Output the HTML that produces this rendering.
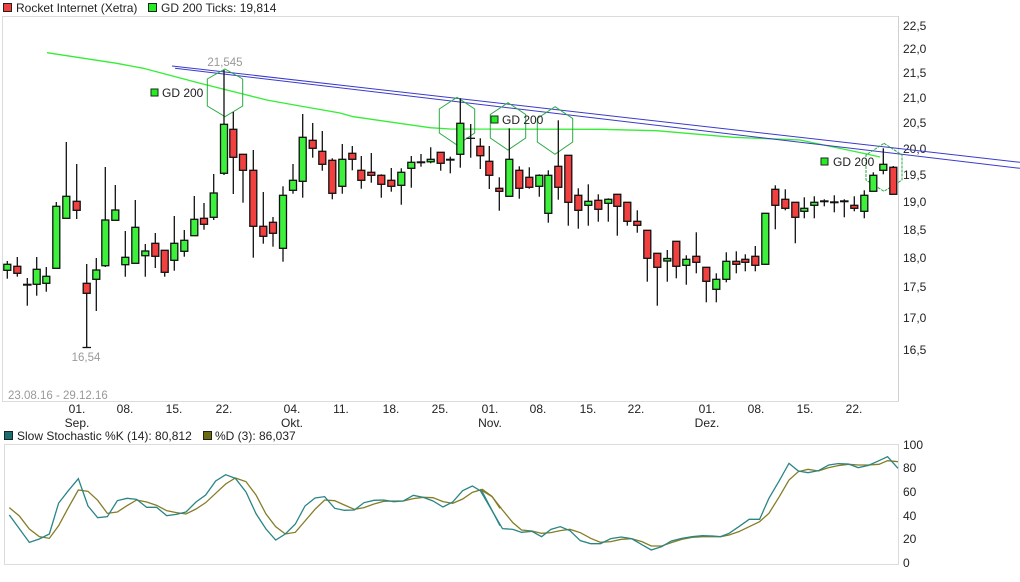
<!DOCTYPE html>
<html><head><meta charset="utf-8"><style>
html,body{margin:0;padding:0;background:#fff;}
svg{display:block;font-family:"Liberation Sans",Arial,sans-serif;}
</style></head><body>
<svg width="1020" height="582" viewBox="0 0 1020 582" xmlns="http://www.w3.org/2000/svg">
<!-- legend -->
<rect x="3.5" y="3.5" width="8" height="8" fill="#f04040" stroke="#222" stroke-width="1"/>
<text x="16" y="12" font-size="12" fill="#222">Rocket Internet (Xetra)</text>
<rect x="148.5" y="3.5" width="8" height="8" fill="#22ee22" stroke="#222" stroke-width="1"/>
<text x="161" y="12" font-size="12" fill="#222">GD 200 Ticks: 19,814</text>

<!-- main frame -->
<rect x="2.5" y="16.5" width="896" height="385" fill="none" stroke="#dcdcdc" stroke-width="1"/>
<line x1="898.5" y1="16" x2="898.5" y2="401" stroke="#d0d0d0"/>

<!-- price axis labels -->
<g font-size="12" fill="#222">
<text x="903" y="30">22,5</text>
<text x="903" y="53">22,0</text>
<text x="903" y="77">21,5</text>
<text x="903" y="102">21,0</text>
<text x="903" y="127">20,5</text>
<text x="903" y="153">20,0</text>
<text x="903" y="179">19,5</text>
<text x="903" y="206">19,0</text>
<text x="903" y="234">18,5</text>
<text x="903" y="262">18,0</text>
<text x="903" y="291">17,5</text>
<text x="903" y="322">17,0</text>
<text x="903" y="354">16,5</text>
</g>

<!-- date axis -->
<g font-size="12" fill="#222" text-anchor="middle">
<text x="77" y="413">01.</text><text x="77" y="427">Sep.</text>
<text x="125" y="413">08.</text>
<text x="174" y="413">15.</text>
<text x="224" y="413">22.</text>
<text x="292" y="413">04.</text><text x="292" y="427">Okt.</text>
<text x="341" y="413">11.</text>
<text x="391" y="413">18.</text>
<text x="440" y="413">25.</text>
<text x="490" y="413">01.</text><text x="490" y="427">Nov.</text>
<text x="538" y="413">08.</text>
<text x="588" y="413">15.</text>
<text x="636" y="413">22.</text>
<text x="707" y="413">01.</text><text x="707" y="427">Dez.</text>
<text x="756" y="413">08.</text>
<text x="805" y="413">15.</text>
<text x="854" y="413">22.</text>
</g>
<text x="8" y="399" font-size="11.5" fill="#999">23.08.16 - 29.12.16</text>

<!-- GD200 line -->
<polyline fill="none" stroke="#33ee33" stroke-width="1.3" points="47,52.7 116.7,63.3 143.3,68.3 200,83.3 266.7,100 300,106 340,113 353.3,116.7 430,127.7 450,129 600,129.3 656.7,130.7 733.3,137.3 800,140 866.7,154 880,157"/>

<!-- trend lines -->
<line x1="172" y1="66" x2="1020" y2="162.3" stroke="#3a3acc" stroke-width="1"/>
<line x1="175" y1="68.3" x2="1020" y2="168.3" stroke="#3a3acc" stroke-width="1"/>

<!-- hexagons -->
<g fill="none" stroke="#2aaa44" stroke-width="1">
<polygon points="225,69 242.7,79 242.7,106 225,116.7 207.3,106 207.3,79"/>
<polygon points="457,97.3 474.7,109 474.7,133 457,145 439.3,133 439.3,109"/>
<polygon points="508,102.7 525.7,114.5 525.7,138 508,150 490.3,138 490.3,114.5"/>
<polygon points="555,106.7 572.7,118.5 572.7,142 555,154.3 537.3,142 537.3,118.5"/>
<polygon points="884,143.3 902,155 902,180 884,191.3 866,180 866,155" stroke-dasharray="3,1"/>
</g>

<!-- labels -->
<text x="225" y="66" font-size="11.5" fill="#999" text-anchor="middle">21,545</text>
<text x="86" y="361" font-size="11.5" fill="#999" text-anchor="middle">16,54</text>
<g font-size="12" fill="#222">
<rect x="151" y="89" width="7" height="7" fill="#22ee22" stroke="#222" stroke-width="1"/><text x="162" y="97">GD 200</text>
<rect x="491" y="116" width="7" height="7" fill="#22ee22" stroke="#222" stroke-width="1"/><text x="502" y="124">GD 200</text>
<rect x="821" y="158" width="7" height="7" fill="#22ee22" stroke="#222" stroke-width="1"/><text x="833" y="166">GD 200</text>
</g>

<!-- candles -->
<g stroke="#111" stroke-width="1.3" id="c">
</g>
<g stroke="#111" stroke-width="1.3">
<line x1="7.3" y1="261" x2="7.3" y2="278.7"/><rect x="3.8" y="264.3" width="7" height="6" fill="#3cf03c"/>
<line x1="17.3" y1="257" x2="17.3" y2="276.7"/><rect x="13.8" y="266.3" width="7" height="7" fill="#f04040"/>
<line x1="27.3" y1="278" x2="27.3" y2="305.7"/><line x1="23" y1="284.7" x2="31.6" y2="284.7" stroke-width="2"/>
<line x1="36.7" y1="257" x2="36.7" y2="295.7"/><rect x="33.2" y="269.3" width="7" height="15" fill="#3cf03c"/>
<line x1="46.3" y1="267" x2="46.3" y2="291.7"/><rect x="42.8" y="276.3" width="7" height="7" fill="#3cf03c"/>
<line x1="56.3" y1="202" x2="56.3" y2="268"/><rect x="52.8" y="206.3" width="7" height="62" fill="#3cf03c"/>
<line x1="66.3" y1="142" x2="66.3" y2="218"/><rect x="62.8" y="196.3" width="7" height="22" fill="#3cf03c"/>
<line x1="76.7" y1="164" x2="76.7" y2="219"/><rect x="73.2" y="201.3" width="7" height="9" fill="#f04040"/>
<line x1="86.7" y1="264" x2="86.7" y2="347.5"/><line x1="82.5" y1="347.5" x2="91" y2="347.5"/><rect x="83.2" y="283.3" width="7" height="10" fill="#f04040"/>
<line x1="96.3" y1="258" x2="96.3" y2="311"/><rect x="92.8" y="270" width="7" height="9.3" fill="#3cf03c"/>
<line x1="105.3" y1="167" x2="105.3" y2="267"/><rect x="101.8" y="220" width="7" height="45.7" fill="#3cf03c"/>
<line x1="115.3" y1="185" x2="115.3" y2="220"/><rect x="111.8" y="210" width="7" height="10.3" fill="#3cf03c"/>
<line x1="125.3" y1="231" x2="125.3" y2="276.7"/><rect x="121.8" y="257.3" width="7" height="7.4" fill="#3cf03c"/>
<line x1="135.3" y1="200" x2="135.3" y2="263"/><rect x="131.8" y="227.3" width="7" height="36" fill="#3cf03c"/>
<line x1="145.3" y1="244" x2="145.3" y2="276.7"/><rect x="141.8" y="251" width="7" height="4.7" fill="#3cf03c"/>
<line x1="155.3" y1="233" x2="155.3" y2="268"/><rect x="151.8" y="243.3" width="7" height="13" fill="#f04040"/>
<line x1="164.7" y1="250" x2="164.7" y2="276.7"/><rect x="161.2" y="250.3" width="7" height="22" fill="#f04040"/>
<line x1="174.3" y1="216" x2="174.3" y2="270.7"/><rect x="170.8" y="243.3" width="7" height="17" fill="#3cf03c"/>
<line x1="184.3" y1="230" x2="184.3" y2="256.7"/><rect x="180.8" y="240.3" width="7" height="11" fill="#3cf03c"/>
<line x1="194.3" y1="196" x2="194.3" y2="235.7"/><rect x="190.8" y="219.3" width="7" height="16.4" fill="#3cf03c"/>
<line x1="204" y1="203" x2="204" y2="229.7"/><rect x="200.5" y="218.3" width="7" height="6" fill="#f04040"/>
<line x1="213.7" y1="174" x2="213.7" y2="220"/><rect x="210.2" y="193" width="7" height="24.3" fill="#3cf03c"/>
<line x1="224" y1="70" x2="224" y2="175"/><rect x="220.5" y="124.3" width="7" height="49" fill="#3cf03c"/>
<line x1="233.3" y1="112" x2="233.3" y2="194"/><rect x="229.8" y="129.3" width="7" height="28" fill="#f04040"/>
<line x1="243" y1="154" x2="243" y2="202.7"/><rect x="239.5" y="154.3" width="7" height="16" fill="#f04040"/>
<line x1="253.3" y1="150" x2="253.3" y2="257.7"/><rect x="249.8" y="170.3" width="7" height="56" fill="#f04040"/>
<line x1="263.3" y1="192" x2="263.3" y2="243.7"/><rect x="259.8" y="226.3" width="7" height="10" fill="#f04040"/>
<line x1="273" y1="217" x2="273" y2="246.7"/><rect x="269.5" y="222.3" width="7" height="11" fill="#f04040"/>
<line x1="283" y1="186.3" x2="283" y2="261.7"/><rect x="279.5" y="195.3" width="7" height="53" fill="#3cf03c"/>
<line x1="293" y1="164" x2="293" y2="193.7"/><rect x="289.5" y="180.3" width="7" height="10" fill="#3cf03c"/>
<line x1="302.7" y1="114" x2="302.7" y2="197.7"/><rect x="299.2" y="137.3" width="7" height="44" fill="#3cf03c"/>
<line x1="312.7" y1="123" x2="312.7" y2="157.7"/><rect x="309.2" y="140.3" width="7" height="8" fill="#f04040"/>
<line x1="322.3" y1="131" x2="322.3" y2="170.7"/><rect x="318.8" y="151.3" width="7" height="13" fill="#f04040"/>
<line x1="332.3" y1="158.3" x2="332.3" y2="199.3"/><rect x="328.8" y="160.3" width="7" height="33" fill="#f04040"/>
<line x1="342.3" y1="144" x2="342.3" y2="193.7"/><rect x="338.8" y="159.3" width="7" height="27" fill="#3cf03c"/>
<line x1="352.3" y1="146" x2="352.3" y2="170.3"/><rect x="348.8" y="153.3" width="7" height="6" fill="#f04040"/>
<line x1="361.3" y1="156" x2="361.3" y2="188.7"/><rect x="357.8" y="170.3" width="7" height="10" fill="#f04040"/>
<line x1="371.3" y1="153" x2="371.3" y2="182.7"/><rect x="367.8" y="172.3" width="7" height="3" fill="#f04040"/>
<line x1="381.3" y1="174.3" x2="381.3" y2="197.7"/><rect x="377.8" y="175.3" width="7" height="9" fill="#f04040"/>
<line x1="391.3" y1="168" x2="391.3" y2="191.7"/><rect x="387.8" y="180.3" width="7" height="6" fill="#f04040"/>
<line x1="401.3" y1="168.3" x2="401.3" y2="204.7"/><rect x="397.8" y="172.3" width="7" height="13" fill="#3cf03c"/>
<line x1="411.3" y1="156" x2="411.3" y2="187.7"/><rect x="407.8" y="162.3" width="7" height="6" fill="#3cf03c"/>
<line x1="421" y1="154" x2="421" y2="166.7"/><line x1="416.7" y1="162.3" x2="425.3" y2="162.3" stroke-width="2"/>
<line x1="430.7" y1="147.3" x2="430.7" y2="163.3"/><rect x="427.2" y="159.3" width="7" height="2.5" fill="#3cf03c"/>
<line x1="440.7" y1="152.3" x2="440.7" y2="170.7"/><rect x="437.2" y="152.3" width="7" height="11" fill="#f04040"/>
<line x1="450.3" y1="156.7" x2="450.3" y2="173.3"/><line x1="446" y1="159.7" x2="454.6" y2="159.7" stroke-width="2"/>
<line x1="460.3" y1="98.3" x2="460.3" y2="167.7"/><rect x="456.8" y="123.3" width="7" height="31" fill="#3cf03c"/>
<line x1="470.7" y1="124" x2="470.7" y2="157.7"/><line x1="466.4" y1="138.3" x2="475" y2="138.3"/>
<line x1="480.3" y1="138.3" x2="480.3" y2="169"/><rect x="476.8" y="146.3" width="7" height="9.4" fill="#f04040"/>
<line x1="489.3" y1="146" x2="489.3" y2="189"/><rect x="485.8" y="161.3" width="7" height="14" fill="#f04040"/>
<line x1="499.3" y1="177.3" x2="499.3" y2="210.7"/><rect x="495.8" y="188.3" width="7" height="3" fill="#f04040"/>
<line x1="509.3" y1="128.3" x2="509.3" y2="196.3"/><rect x="505.8" y="159.3" width="7" height="37" fill="#3cf03c"/>
<line x1="519.3" y1="166.3" x2="519.3" y2="198.7"/><rect x="515.8" y="170.3" width="7" height="18" fill="#f04040"/>
<line x1="529.3" y1="167.3" x2="529.3" y2="188.7"/><rect x="525.8" y="177.3" width="7" height="10" fill="#f04040"/>
<line x1="539.3" y1="174.3" x2="539.3" y2="196.7"/><rect x="535.8" y="175.3" width="7" height="11" fill="#3cf03c"/>
<line x1="548.3" y1="170.3" x2="548.3" y2="222.7"/><rect x="544.8" y="175.3" width="7" height="38" fill="#3cf03c"/>
<line x1="558.3" y1="120.3" x2="558.3" y2="199.7"/><rect x="554.8" y="166.3" width="7" height="21" fill="#f04040"/>
<line x1="568.3" y1="155.3" x2="568.3" y2="225.7"/><rect x="564.8" y="155.3" width="7" height="47" fill="#f04040"/>
<line x1="578.3" y1="188.3" x2="578.3" y2="228.7"/><rect x="574.8" y="195.3" width="7" height="15" fill="#f04040"/>
<line x1="588.3" y1="184.3" x2="588.3" y2="225.7"/><rect x="584.8" y="201.3" width="7" height="4" fill="#3cf03c"/>
<line x1="598.3" y1="194.3" x2="598.3" y2="221.7"/><rect x="594.8" y="200.3" width="7" height="9" fill="#f04040"/>
<line x1="608.3" y1="198.3" x2="608.3" y2="221.7"/><rect x="604.8" y="199.3" width="7" height="4" fill="#3cf03c"/>
<line x1="617.3" y1="194.3" x2="617.3" y2="235.7"/><rect x="613.8" y="194.3" width="7" height="12" fill="#f04040"/>
<line x1="627.3" y1="202.3" x2="627.3" y2="225.7"/><rect x="623.8" y="202.3" width="7" height="19" fill="#f04040"/>
<line x1="637.3" y1="210.3" x2="637.3" y2="232.7"/><rect x="633.8" y="221.3" width="7" height="4" fill="#f04040"/>
<line x1="647.3" y1="230.3" x2="647.3" y2="281.7"/><rect x="643.8" y="230.3" width="7" height="28" fill="#f04040"/>
<line x1="657.3" y1="253.3" x2="657.3" y2="305.7"/><rect x="653.8" y="253.3" width="7" height="14" fill="#f04040"/>
<line x1="667.3" y1="250" x2="667.3" y2="281.7"/><rect x="663.8" y="258.5" width="7" height="2.5" fill="#3cf03c"/>
<line x1="676.3" y1="241.3" x2="676.3" y2="278.3"/><rect x="672.8" y="241.3" width="7" height="25" fill="#f04040"/>
<line x1="686.3" y1="255.3" x2="686.3" y2="284.7"/><rect x="682.8" y="259.3" width="7" height="6" fill="#3cf03c"/>
<line x1="696.3" y1="232.3" x2="696.3" y2="273.3"/><rect x="692.8" y="256.3" width="7" height="6" fill="#f04040"/>
<line x1="706.3" y1="267.3" x2="706.3" y2="302.3"/><rect x="702.8" y="267.3" width="7" height="14" fill="#f04040"/>
<line x1="716.3" y1="273.3" x2="716.3" y2="302.3"/><rect x="712.8" y="279.3" width="7" height="10" fill="#3cf03c"/>
<line x1="726.3" y1="252.3" x2="726.3" y2="282.3"/><rect x="722.8" y="261.3" width="7" height="18" fill="#3cf03c"/>
<line x1="736.3" y1="251.3" x2="736.3" y2="273.3"/><rect x="732.8" y="261.3" width="7" height="3" fill="#f04040"/>
<line x1="745.3" y1="254.3" x2="745.3" y2="271.3"/><rect x="741.8" y="259.3" width="7" height="3" fill="#f04040"/>
<line x1="755.3" y1="246" x2="755.3" y2="271.3"/><rect x="751.8" y="256.3" width="7" height="9" fill="#f04040"/>
<line x1="765.3" y1="213.3" x2="765.3" y2="264.3"/><rect x="761.8" y="213.3" width="7" height="51" fill="#3cf03c"/>
<line x1="775.3" y1="185.3" x2="775.3" y2="229.3"/><rect x="771.8" y="189.3" width="7" height="16" fill="#f04040"/>
<line x1="785.3" y1="189.3" x2="785.3" y2="210.3"/><rect x="781.8" y="199.3" width="7" height="9" fill="#f04040"/>
<line x1="795.3" y1="202.3" x2="795.3" y2="243.3"/><rect x="791.8" y="202.3" width="7" height="15" fill="#f04040"/>
<line x1="804.3" y1="197.3" x2="804.3" y2="218.3"/><rect x="800.8" y="208.3" width="7" height="3" fill="#3cf03c"/>
<line x1="814.3" y1="196.3" x2="814.3" y2="218.3"/><rect x="810.8" y="202.3" width="7" height="3" fill="#3cf03c"/>
<line x1="824.3" y1="199.3" x2="824.3" y2="206.3"/><line x1="820" y1="201.3" x2="828.6" y2="201.3" stroke-width="2"/>
<line x1="834.3" y1="195.3" x2="834.3" y2="212.3"/><line x1="830" y1="202.3" x2="838.6" y2="202.3" stroke-width="2"/>
<line x1="844.3" y1="199.3" x2="844.3" y2="217.3"/><line x1="840" y1="201.3" x2="848.6" y2="201.3" stroke-width="2"/>
<line x1="854.3" y1="196.3" x2="854.3" y2="211.3"/><rect x="850.8" y="205.3" width="7" height="3" fill="#f04040"/>
<line x1="864.3" y1="190.3" x2="864.3" y2="218.3"/><rect x="860.8" y="195.3" width="7" height="16" fill="#3cf03c"/>
<line x1="873.3" y1="172.3" x2="873.3" y2="191.3"/><rect x="869.8" y="175.3" width="7" height="16" fill="#3cf03c"/>
<line x1="883.3" y1="148.3" x2="883.3" y2="174.3"/><rect x="879.8" y="164.3" width="7" height="6" fill="#3cf03c"/>
<line x1="893.3" y1="166" x2="893.3" y2="194.3"/><rect x="889.8" y="167.3" width="7" height="27" fill="#f04040"/>
</g>

<!-- stochastic legend -->
<rect x="4.5" y="431.5" width="8" height="8" fill="#1a6e70" stroke="#222" stroke-width="1"/>
<text x="17" y="440" font-size="12" fill="#222">Slow Stochastic %K (14): 80,812</text>
<rect x="203.5" y="431.5" width="8" height="8" fill="#6b6b10" stroke="#222" stroke-width="1"/>
<text x="215" y="440" font-size="12" fill="#222">%D (3): 86,037</text>

<rect x="4.5" y="444.5" width="894" height="120" fill="none" stroke="#dcdcdc" stroke-width="1"/>
<g font-size="12" fill="#222">
<text x="903" y="449">100</text>
<text x="903" y="472">80</text>
<text x="903" y="496">60</text>
<text x="903" y="520">40</text>
<text x="903" y="543">20</text>
<text x="903" y="567">0</text>
</g>

<g fill="none" stroke-width="1.3">
<g transform="translate(0,380) scale(0.33333)">
<polyline vector-effect="non-scaling-stroke" stroke="#857d25" points="28,383 58,408 88,447 118,470 148,475 176,437 205,383 235,330 264,334 293,361 322,400 352,396 381,377 410,360 440,366 470,376 500,392 529,398 558,402 588,387 617,368 647,340 677,312 706,294 738,305 768,345 798,402 827,440 856,462 886,457 915,423 945,388 974,360 1004,362 1033,375 1063,388 1092,383 1122,372 1151,364 1181,363 1210,363 1240,356 1270,352 1299,353 1329,365 1358,370 1388,357 1417,337 1447,328 1476,349 1500,385"/>
<polyline vector-effect="non-scaling-stroke" stroke="#2a8585" points="28,405 88,487 118,477 148,462 176,369 205,332 235,296 264,378 293,413 322,410 352,362 381,355 410,358 440,382 470,382 500,407 529,403 558,396 588,366 617,345 647,303 677,284 706,295 738,336 768,401 798,447 827,480 856,462 886,432 915,378 945,354 974,350 1004,385 1033,391 1063,390 1092,368 1122,361 1151,360 1181,365 1210,363 1240,346 1270,352 1299,363 1329,381 1358,366 1388,332 1417,318 1447,336 1476,391 1500,437"/>
</g>
<g transform="translate(480,430) scale(0.346,0.33333)">
<polyline vector-effect="non-scaling-stroke" stroke="#857d25" points="0,178 35,200 65,240 95,278 120,300 150,303 178,310 205,308 232,302 260,298 290,308 320,325 348,337 378,335 408,328 438,326 468,335 495,348 525,348 553,338 583,328 613,322 643,320 673,320 695,320 720,315 748,305 778,290 808,275 835,250 865,200 893,150 920,125 948,118 978,123 1008,113 1035,107 1065,103 1093,105 1123,105 1153,103 1178,92 1208,95"/>
<polyline vector-effect="non-scaling-stroke" stroke="#2a8585" points="0,180 65,296 95,298 120,307 150,304 178,320 205,298 232,290 260,302 290,332 320,341 348,341 378,326 408,321 438,326 468,344 495,360 525,350 553,333 583,325 613,320 643,317 673,318 695,320 720,310 748,290 778,268 808,268 835,205 865,152 893,100 920,123 948,128 978,122 1008,105 1035,101 1065,102 1093,113 1123,106 1153,92 1178,80 1208,115"/>
</g>
</g>
</svg>
</body></html>
